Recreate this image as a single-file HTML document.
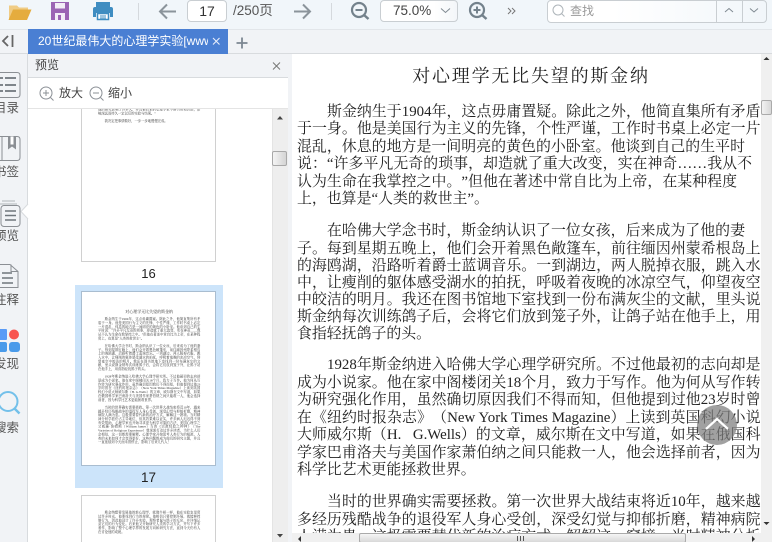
<!DOCTYPE html>
<html lang="zh"><head><meta charset="utf-8"><title>PDF</title>
<style>
*{box-sizing:border-box;margin:0;padding:0}
html,body{width:772px;height:542px;overflow:hidden;background:#fff}
body{position:relative;font-family:"Liberation Sans","Noto Sans CJK SC",sans-serif;color:#444;text-spacing-trim:space-all}
.a{position:absolute}
svg{position:absolute;overflow:visible}
.l{position:absolute;left:297px;width:463.500px;height:18px;font:14.900px/18px "Liberation Serif","Noto Serif CJK SC",serif;color:#222;white-space:nowrap;text-align:justify;text-align-last:justify}
.n{text-align:left;text-align-last:left}
.rl{position:absolute;font-size:12.500px;line-height:16px;color:#555;white-space:nowrap}
.thumb{position:absolute;left:81px;width:135px;background:#fff;border:1px solid #d0d0d0;overflow:hidden}
.tt{position:absolute;width:463px;transform-origin:0 0;transform:scale(.221);font:15px/17.400px "Liberation Serif","Noto Serif CJK SC",serif;color:#333;text-align:justify}
.tt p{text-indent:30px;margin-bottom:17.400px}
.tt h4{font:normal 18px/24px "Liberation Serif","Noto Serif CJK SC",serif;text-align:center;margin-bottom:14px}
</style></head><body>

<!-- toolbar -->
<div class="a" style="left:0;top:0;width:772px;height:30px;background:#f1f6fa;border-bottom:1px solid #e2e6ea"></div>
<div class="a" style="left:187px;top:0;width:40px;height:22px;background:#fff;border:1px solid #c9ced2;border-radius:4px;font-size:14px;line-height:20px;text-align:center;color:#333">17</div>
<div class="a" style="left:233px;top:2px;font-size:13.500px;line-height:18px;color:#555">/250页</div>
<div class="a" style="left:380px;top:0;width:78px;height:22px;border:1px solid #c9ced2;border-radius:4px;background:linear-gradient(90deg,#fff 70%,#f3f6f9);font-size:13.500px;line-height:20px;color:#444;padding-left:12px">75.0%</div>
<div class="a" style="left:547px;top:0;width:220px;height:23px;border:1px solid #c9ced2;border-radius:4px;background:linear-gradient(90deg,#fff 30%,#f1f6fa)"></div>
<div class="a" style="left:716px;top:0;width:1px;height:22px;background:#c9ced2"></div>
<div class="a" style="left:742px;top:0;width:1px;height:22px;background:#c9ced2"></div>
<div class="a" style="left:570px;top:2px;font-size:12px;line-height:18px;color:#999">查找</div>
<svg style="left:0;top:0" width="772" height="30">
 <path d="M9 5.500h8l2 2h9v3H13l-4 9z" fill="#f0cc85"/>
 <path d="M13 9.500h18.500l-4.500 10.500H8.500z" fill="#e5ac3e"/>
 <path d="M51 2h18v18H51z" fill="#9b64b4"/>
 <path d="M55 3h10v5.500H55z" fill="#f3edf7"/>
 <path d="M55 13h10v7H55z" fill="#f3edf7"/><path d="M58 15h3v5h-3z" fill="#9b64b4"/>
 <path d="M96 2h14v5H96z" fill="#3f8dc1"/>
 <path d="M93 9q0-2 2-2h16q2 0 2 2v8h-3v-4H96v4h-3z" fill="#3f8dc1"/>
 <path d="M97.500 13.500h11v6h-11z" fill="#fff" stroke="#3f8dc1" stroke-width="1.500"/><path d="M100 16h6M100 18h6" stroke="#3f8dc1"/>
 <path d="M138.500 3v17M331.500 3v17" stroke="#d5d9dd"/>
 <path d="M176 11.500H160M167 4.500l-7 7 7 7" fill="none" stroke="#8b949b" stroke-width="2"/>
 <path d="M294 11.500h16M303 4.500l7 7-7 7" fill="none" stroke="#8b949b" stroke-width="2"/>
 <circle cx="359" cy="10" r="7" fill="none" stroke="#74828c" stroke-width="2.200"/><path d="M364 15l4.500 4" stroke="#74828c" stroke-width="2.500"/><path d="M355.500 10h7" stroke="#74828c" stroke-width="2"/>
 <circle cx="477" cy="10" r="7" fill="none" stroke="#74828c" stroke-width="2.200"/><path d="M482 15l4.500 4" stroke="#74828c" stroke-width="2.500"/><path d="M473.500 10h7M477 6.500v7" stroke="#74828c" stroke-width="2"/>
 <path d="M508 8l3 3-3 3M512 8l3 3-3 3" fill="none" stroke="#777"/>
 <path d="M441 8.500l4.500 4 4.500-4" fill="none" stroke="#808a92"/>
 <circle cx="558" cy="10" r="5" fill="none" stroke="#aeb5ba"/><path d="M561.500 13.500l3 3" stroke="#aeb5ba"/>
 <path d="M725 12l4-3.500 4 3.500M750 8.500l4 3.500 4-3.500" fill="none" stroke="#808a92"/>
</svg>

<!-- tab row -->
<div class="a" style="left:0;top:30px;width:772px;height:24px;background:#f1f3f6;border-bottom:1px solid #d8dbde"></div>
<svg style="left:0;top:30px" width="30" height="24"><path d="M8 6l-5 5 5 5" fill="none" stroke="#666" stroke-width="1.800"/><path d="M12.500 5v12" stroke="#666" stroke-width="1.800"/></svg>
<div class="a" style="left:28px;top:29px;width:200px;height:25px;background:#4a7fd3;color:#fff;font-size:12px;line-height:25px;padding-left:10px;overflow:hidden;white-space:nowrap"><span style="display:block;width:170px;overflow:hidden">20世纪最伟大的心理学实验[www.mianfeiwucha.com]</span></div>
<svg style="left:210px;top:34px" width="50" height="16"><path d="M3 4l6.500 6.500M9.500 4L3 10.500" stroke="#e8eefa" stroke-width="1.100"/><path d="M32 3.500v11M26.500 9h11" stroke="#7c8792" stroke-width="1.800"/></svg>

<!-- rail -->
<div class="a" style="left:0;top:54px;width:28px;height:488px;background:#f1f3f6;border-right:1px solid #d8dbde"></div>
<svg style="left:0;top:54px" width="30" height="488">
 <path d="M-6 18.500H17q3 0 3 3v19q0 3-3 3H-6z" fill="none" stroke="#8b8f94"/>
 <path d="M0 24h3M5 24H16M0 31h3M5 31H16M0 37h3M5 37H16" stroke="#6f767c" stroke-width="1.700"/>
 <path d="M-3 82.500H17q3 0 3 3v18q0 3-3 3H-3zM2 82.500v24" fill="none" stroke="#8b8f94"/>
 <path d="M8 82.500h8v13l-4-3-4 3z" fill="#8b8f94"/><path d="M10.500 82.500h3v8h-3z" fill="#fff"/>
 <path d="M2 147h13M0 150h17" stroke="#b0b4b8"/>
 <rect x="1" y="151.500" width="19" height="21" rx="3" fill="#f1f3f6" stroke="#8b8f94"/>
 <path d="M5 157h11M5 161.500h11M5 166h11" stroke="#6f767c" stroke-width="1.500"/>
 <path d="M-1 210.500H10l8 7v16H-1z" fill="none" stroke="#8b8f94"/><path d="M11 210.500v7h7" fill="none" stroke="#8b8f94"/>
 <path d="M2 219h10M2 224h11M2 229h11" stroke="#6f767c" stroke-width="1.500"/>
 <path d="M-3 275h9q1 0 1 1v9q0 1-1 1h-9z" fill="#5a9bf6"/>
 <circle cx="14" cy="280.500" r="5" fill="#f8544f"/>
 <rect x="-3" y="288" width="10" height="10" rx="2" fill="#4a9bea"/><rect x="9" y="288" width="11" height="10" rx="3" fill="#4a9bea"/>
 <circle cx="8" cy="347.500" r="9.500" fill="none" stroke="#73c0ea" stroke-width="2"/><path d="M14.500 354.500l5 5" stroke="#73c0ea" stroke-width="2.500"/>
</svg>
<div class="rl" style="left:-6px;top:100px">目录</div>
<div class="rl" style="left:-6px;top:164px">书签</div>
<div class="rl" style="left:-6px;top:228px">预览</div>
<div class="rl" style="left:-6px;top:292px">注释</div>
<div class="rl" style="left:-6px;top:356px">发现</div>
<div class="rl" style="left:-6px;top:420px">搜索</div>
<svg style="left:21px;top:204px" width="8" height="16"><path d="M7 0L0 7.500 7 15z" fill="#fff"/><path d="M7 0L0 7.500 7 15" fill="none" stroke="#d8dbde"/></svg>

<!-- thumbs -->
<div class="a" style="left:75px;top:285px;width:148px;height:203px;background:#cce4fa"></div>
<div class="thumb" style="top:90px;height:172px">
 <div class="tt" style="left:15.500px;top:17px"><p style="text-indent:0">他的研究影响了许多人，并且被后来的心理学家不断引用和讨论，影响深远而持久一定以后的实验与结果。”</p><p>我决定把事情做好，一步一步地慢慢完成。</p></div>
</div>
<div class="a" style="left:81px;top:266px;width:135px;text-align:center;font-size:13px;line-height:16px;color:#222">16</div>
<div class="thumb" style="top:291px;height:175px;border-color:#a9bdd0">
 <div class="tt" style="left:15.500px;top:17px">
 <h4>对心理学无比失望的斯金纳</h4>
 <p>斯金纳生于1904年，这点毋庸置疑。除此之外，他简直集所有矛盾于一身。他是美国行为主义的先锋，个性严谨，工作时书桌上必定一片混乱，休息的地方是一间明亮的黄色的小卧室。他谈到自己的生平时说：“许多平凡无奇的琐事，却造就了重大改变，实在神奇……我从不认为生命在我掌控之中。”但他在著述中常自比为上帝，在某种程度上，也算是“人类的救世主”。</p>
 <p>在哈佛大学念书时，斯金纳认识了一位女孩，后来成为了他的妻子。每到星期五晚上，他们会开着黑色敞篷车，前往缅因州蒙希根岛上的海鸥湖，沿路听着爵士蓝调音乐。一到湖边，两人脱掉衣服，跳入水中，让瘦削的躯体感受湖水的拍抚，呼吸着夜晚的冰凉空气，仰望夜空中皎洁的明月。我还在图书馆地下室找到一份布满灰尘的文献，里头说斯金纳每次训练鸽子后，会将它们放到笼子外，让鸽子站在他手上，用食指轻抚鸽子的头。</p>
 <p>1928年斯金纳进入哈佛大学心理学研究所。不过他最初的志向却是成为小说家。他在家中阁楼闭关18个月，致力于写作。他为何从写作转为研究强化作用，虽然确切原因我们不得而知，但他提到过他23岁时曾在《纽约时报杂志》（New York Times Magazine）上读到英国科幻小说大师威尔斯（H. G.Wells）的文章，威尔斯在文中写道，如果在俄国科学家巴甫洛夫与美国作家萧伯纳之间只能救一人，他会选择前者，因为科学比艺术更能拯救世界。</p>
 <p>当时的世界确实需要拯救。第一次世界大战结束将近10年，越来越多经历残酷战争的退役军人身心受创，深受幻觉与抑郁折磨，精神病院人满为患。这极需要替代新的治疗方式，解解这一窘境。当时精神分析学派仍占主导地位，但其效果难以证实，许多病人迟迟得不到有效帮助，心理学家也开始寻求更为科学可靠的方法，美国心理学之父威廉·詹姆斯（William James）写的《宗教经验之种种》（The Varieties of Religious Experience）曾深深打动过许多读者，为什么人们会相信，这一切都需要解释。心理学家开始思考人类行为的根源，人类的未来如何才会变得更好，这些问题都成为他们的研究主题，并且一直延续到今天而未曾停止，影响了后来几代人！</p>
 </div>
</div>
<div class="a" style="left:81px;top:469px;width:135px;text-align:center;font-size:13.500px;line-height:17px;color:#222">17</div>
<div class="thumb" style="top:495px;height:60px">
 <div class="tt" style="left:15.500px;top:15px"><p>斯金纳想要发展他的新心理学，就像牛顿一样，他在实验室里度过许多时光，他要找到行为的规律。他相信只要控制环境，就能够控制行为，因此他设计了许多实验，观察老鼠与鸽子的反应，并详细记录它们的行为变化。后来他又开始研究人类的学习方式，并写下许多著作，影响了整个心理学界的发展方向和研究方法，直到今天仍有人在讨论他的成就。</p></div>
</div>

<!-- preview panel header, above thumbs -->
<div class="a" style="left:28px;top:54px;width:260px;height:24px;background:#f1f3f6;border-bottom:1px solid #d8dbde"></div>
<div class="a" style="left:35px;top:57px;font-size:12px;line-height:17px;color:#444">预览</div>
<svg style="left:270px;top:60px" width="14" height="14"><path d="M3 2.500l7 7M10 2.500l-7 7" stroke="#777"/></svg>
<div class="a" style="left:28px;top:78px;width:260px;height:31px;background:#fff;border-bottom:1px solid #e4e4e4"></div>
<svg style="left:38px;top:84px" width="75" height="20">
 <circle cx="8" cy="9" r="6" fill="none" stroke="#8b9096"/><path d="M12.500 13.500l3 3" stroke="#8b9096"/><path d="M5 9h6M8 6v6" stroke="#8b9096"/>
 <circle cx="58" cy="9" r="6" fill="none" stroke="#8b9096"/><path d="M62.500 13.500l3 3" stroke="#8b9096"/><path d="M55 9h6" stroke="#8b9096"/>
</svg>
<div class="a" style="left:59px;top:85px;font-size:12px;line-height:17px;color:#444">放大</div>
<div class="a" style="left:108px;top:85px;font-size:12px;line-height:17px;color:#444">缩小</div>

<!-- panel scrollbar -->
<div class="a" style="left:272px;top:109px;width:16px;height:433px;background:#eeeeee;border-left:1px solid #e4e4e4"></div>
<svg style="left:272px;top:112px" width="16" height="430"><path d="M5 7.500l3-3.500 3 3.500z" fill="#444"/><path d="M5 422l3 3.500 3-3.500z" fill="#444"/></svg>
<div class="a" style="left:272px;top:151px;width:15px;height:15px;border:1px solid #a8a8a8;border-radius:2px;background:linear-gradient(90deg,#f4f4f4,#d4d4d4)"></div>
<div class="a" style="left:288px;top:54px;width:4px;height:488px;background:#f1f3f6"></div>

<!-- document -->
<div class="l n" style="left:292px;width:478px;top:64px;height:24px;font-size:18px;line-height:24px;text-align:center;text-align-last:center;letter-spacing:1.800px">对心理学无比失望的斯金纳</div>
<div class="l" style="left:327px;width:433.500px;top:102.500px">斯金纳生于1904年，这点毋庸置疑。除此之外，他简直集所有矛盾</div>
<div class="l" style="top:120px">于一身。他是美国行为主义的先锋，个性严谨，工作时书桌上必定一片</div>
<div class="l" style="top:137.500px;width:448px">混乱，休息的地方是一间明亮的黄色的小卧室。他谈到自己的生平时</div>
<div class="l" style="top:155px;width:455px">说：“许多平凡无奇的琐事，却造就了重大改变，实在神奇……我从不</div>
<div class="l" style="top:172.500px;width:440px">认为生命在我掌控之中。”但他在著述中常自比为上帝，在某种程度</div>
<div class="l" style="top:190px;width:184px">上，也算是“人类的救世主”。</div>

<div class="l" style="left:327px;width:418px;top:222px">在哈佛大学念书时，斯金纳认识了一位女孩，后来成为了他的妻</div>
<div class="l" style="top:239.500px">子。每到星期五晚上，他们会开着黑色敞篷车，前往缅因州蒙希根岛上</div>
<div class="l" style="top:256.500px">的海鸥湖，沿路听着爵士蓝调音乐。一到湖边，两人脱掉衣服，跳入水</div>
<div class="l" style="top:273.500px">中，让瘦削的躯体感受湖水的拍抚，呼吸着夜晚的冰凉空气，仰望夜空</div>
<div class="l" style="top:290.500px">中皎洁的明月。我还在图书馆地下室找到一份布满灰尘的文献，里头说</div>
<div class="l" style="top:308px">斯金纳每次训练鸽子后，会将它们放到笼子外，让鸽子站在他手上，用</div>
<div class="l n" style="top:325px">食指轻抚鸽子的头。</div>

<div class="l" style="left:327px;width:433.500px;top:356px">1928年斯金纳进入哈佛大学心理学研究所。不过他最初的志向却是</div>
<div class="l" style="top:374px">成为小说家。他在家中阁楼闭关18个月，致力于写作。他为何从写作转</div>
<div class="l" style="top:391px">为研究强化作用，虽然确切原因我们不得而知，但他提到过他23岁时曾</div>
<div class="l" style="top:409px">在《纽约时报杂志》（New York Times Magazine）上读到英国科幻小说</div>
<div class="l" style="top:426px">大师威尔斯（H.&nbsp;&nbsp; G.Wells）的文章，威尔斯在文中写道，如果在俄国科</div>
<div class="l" style="top:443.500px">学家巴甫洛夫与美国作家萧伯纳之间只能救一人，他会选择前者，因为</div>
<div class="l n" style="top:461px">科学比艺术更能拯救世界。</div>

<div class="l" style="left:327px;width:433.500px;top:493px">当时的世界确实需要拯救。第一次世界大战结束将近10年，越来越</div>
<div class="l" style="top:510.500px">多经历残酷战争的退役军人身心受创，深受幻觉与抑郁折磨，精神病院</div>
<div class="l" style="top:528px">人满为患。这极需要替代新的治疗方式，解解这一窘境。当时精神分析</div>

<!-- main scrollbars -->
<div class="a" style="left:761px;top:54px;width:11px;height:488px;background:#f0f0f0"></div>
<svg style="left:761px;top:54px" width="11" height="488"><path d="M2.500 6l3-3 3 3z" fill="#333"/><path d="M2.500 468l3 3 3-3z" fill="#333"/></svg>
<div class="a" style="left:761px;top:100px;width:11px;height:15px;background:linear-gradient(90deg,#f2f2f2,#d8d8d8);border:1px solid #aaa;border-radius:2px"></div>
<div class="a" style="left:292px;top:533px;width:469px;height:9px;background:#f0f0f0"></div>
<div class="a" style="left:359px;top:533px;width:327px;height:10px;background:linear-gradient(#f6f6f6,#d8d8d8);border:1px solid #aaa;border-radius:2px"></div>
<svg style="left:292px;top:533px" width="480" height="9"><path d="M9 3l-3 3 3 3zM460 3l3 3-3 3z" fill="#333"/><path d="M225.500 3v5M228.500 3v5M231.500 3v5" stroke="#555"/></svg>

<!-- back to top -->
<div class="a" style="left:697px;top:405px;width:40px;height:40px;border-radius:50%;background:rgba(125,125,125,.72)"></div>
<svg style="left:697px;top:405px" width="40" height="40"><path d="M9 24l11-10 11 10" fill="none" stroke="#fff" stroke-width="2.200"/></svg>
</body></html>
